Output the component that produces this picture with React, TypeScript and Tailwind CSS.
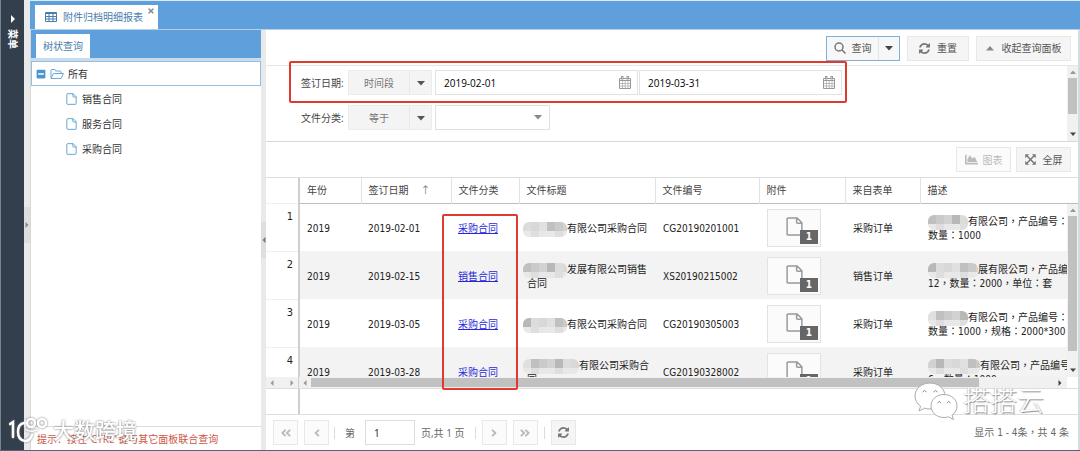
import { useState } from "react";
import type { ReactNode } from "react";
import { FaAngleDoubleLeft, FaAngleDoubleRight, FaAngleLeft, FaAngleRight, FaChartArea, FaMinusSquare, FaTimes } from "react-icons/fa";

type Row = {
  year: string;
  date: string;
  category: string;
  title: string;
  titleRest?: string;
  titleMask: number;
  code: string;
  form: string;
  desc: string;
  descRest: string;
  descMask: number;
};

const rows: Row[] = [
  { year: "2019", date: "2019-02-01", category: "采购合同", title: "有限公司采购合同", titleMask: 44, code: "CG20190201001", form: "采购订单", desc: "有限公司，产品编号：", descRest: "数量：1000", descMask: 40 },
  { year: "2019", date: "2019-02-15", category: "销售合同", title: "发展有限公司销售", titleRest: "合同", titleMask: 44, code: "XS20190215002", form: "销售订单", desc: "展有限公司，产品编号：", descRest: "12，数量：2000，单位：套", descMask: 50 },
  { year: "2019", date: "2019-03-05", category: "采购合同", title: "有限公司采购合同", titleMask: 44, code: "CG20190305003", form: "采购订单", desc: "有限公司，产品编号：", descRest: "数量：1000，规格：2000*300", descMask: 40 },
  { year: "2019", date: "2019-03-28", category: "采购合同", title: "有限公司采购合", titleRest: "同", titleMask: 56, code: "CG20190328002", form: "采购订单", desc: "有限公司，产品编号：", descRest: "6，数量：1000", descMask: 52 },
];

const columns = ["年份", "签订日期", "文件分类", "文件标题", "文件编号", "附件", "来自表单", "描述"];

function TableIcon() {
  return (
    <svg className="h-3 w-3 shrink-0" viewBox="0 0 12 12" fill="none" stroke="currentColor">
      <path d="M.5 1.5h11v9H.5zM.5 2.5h11M.5 5.5h11M.5 8h11M4 2v9M8 2v9" />
    </svg>
  );
}

function FileIcon({ className }: { className: string }) {
  return (
    <svg className={className} viewBox="0 0 16 18" fill="none" stroke="currentColor" strokeWidth="1.4" strokeLinejoin="round">
      <path d="M2 1h8.500l4.500 4.500V16q0 1-1 1H2q-1 0-1-1V2q0-1 1-1zM10 1v4q0 1 1 1h4" />
    </svg>
  );
}

function FolderIcon() {
  return (
    <svg className="h-3 w-[14px] shrink-0 text-[#6aa9dc]" viewBox="0 0 14 12" fill="none" stroke="currentColor" strokeLinejoin="round">
      <path d="M1 10V2.500Q1 1.500 2 1.500h2.500q1 0 1 1v.500H10q1 0 1 1V5.500M1 10.500l2.500-5h10l-2.500 5z" />
    </svg>
  );
}

function RefreshIcon() {
  return (
    <svg className="h-[11px] w-[11px] shrink-0 text-[#777]" viewBox="0 0 1536 1536" fill="currentColor">
      <path d="M1511 928q0 5-1 7-64 268-268 434.500t-478 166.500q-146 0-282.500-55t-243.500-157l-129 129q-19 19-45 19t-45-19-19-45v-448q0-26 19-45t45-19h448q26 0 45 19t19 45-19 45l-137 137q71 66 161 102t187 36q134 0 250-65t186-179q11-17 53-117 8-23 30-23h192q13 0 22.500 9.500t9.500 22.500zm25-800v448q0 26-19 45t-45 19h-448q-26 0-45-19t-19-45 19-45l138-138q-148-137-349-137-134 0-250 65t-186 179q-11 17-53 117-8 23-30 23h-199q-13 0-22.500-9.500t-9.500-22.500v-7q65-268 270-434.500t480-166.500q146 0 284 55.500t245 156.500l130-129q19-19 45-19t45 19 19 45z" />
    </svg>
  );
}

function SearchIcon() {
  return (
    <svg className="h-3 w-3 shrink-0 text-[#777]" viewBox="0 0 12 12" fill="none" stroke="currentColor" strokeWidth="1.500">
      <circle cx="5" cy="5" r="4" />
      <path d="M8 8l3.500 3.500" />
    </svg>
  );
}

function ExpandIcon() {
  return (
    <svg className="h-[11px] w-[11px] shrink-0 text-[#777]" viewBox="0 0 12 12" fill="currentColor" stroke="currentColor">
      <path d="M.5.5h3.500l-3.500 3.500zM11.500.5v3.500L8 .5zM.5 11.500V8L4 11.500zM11.500 11.500H8L11.500 8z" strokeWidth=".5" />
      <path d="M2 2l8 8M10 2l-8 8" strokeWidth="1.600" />
    </svg>
  );
}

function CalendarIcon() {
  return (
    <svg className="h-[13px] w-3" viewBox="0 0 12 13" fill="none" stroke="currentColor">
      <path d="M.5 2.500h11v10H.5zM.5 4.500h11" />
      <path d="M.5 7.500h11M.5 10h11M3.500 5v7.500M6.200 5v7.500M9 5v7.500" strokeWidth=".6" />
      <rect x="2.500" y=".5" width="1.500" height="2.500" fill="white" />
      <rect x="8" y=".5" width="1.500" height="2.500" fill="white" />
    </svg>
  );
}

function Caret({ dir, className = "" }: { dir: "up" | "down" | "left" | "right"; className?: string }) {
  const d = {
    up: "M0 6.500L4 2l4 4.500z",
    down: "M0 2h8L4 6.500z",
    left: "M6 0v8L2 4z",
    right: "M2 0v8l4-4z",
  }[dir];
  return (
    <svg className={`h-2 w-2 shrink-0 ${className}`} viewBox="0 0 8 8" fill="currentColor">
      <path d={d} />
    </svg>
  );
}

// pixelated patch that hides the company name
function Mask({ width, seed }: { width: number; seed: number }) {
  const tones = ["#dcdcdc", "#d2d2d2", "#c0c0c0", "#d8d8d8", "#b8b8b8", "#cacaca", "#e0e0e0"];
  const cells: ReactNode[] = [];
  for (let y = 0; y < 2; y++) {
    for (let x = 0; x * 8 < width; x++) {
      const t = y === 0 ? tones[(x * 3 + seed * 2) % tones.length] : x % 3 === 1 ? "#dedede" : "#e8e8e8";
      cells.push(<rect key={`${x}-${y}`} x={x * 8} y={y * 9} width="8" height={y ? 6 : 9} fill={t} />);
    }
  }
  return (
    <svg className="inline-block h-[15px] shrink-0 rounded-md" style={{ width }} viewBox={`0 0 ${width} 15`}>
      {cells}
    </svg>
  );
}

function ToolButton({ children, className = "", disabled = false }: { children: ReactNode; className?: string; disabled?: boolean }) {
  return (
    <button
      type="button"
      disabled={disabled}
      className={`flex h-[25px] items-center justify-center border border-[#e8e8e8] ${disabled ? "bg-[#fbfbfb] text-[#bbb]" : "bg-[#f5f5f5] text-[#555]"} ${className}`}
    >
      {children}
    </button>
  );
}

function Operator({ label, text }: { label: string; text: string }) {
  return (
    <button type="button" aria-label={label} className="ml-1 flex h-[25px] w-[84px] border border-[#ececec] bg-[#f4f4f4] text-[#777]">
      <span className="flex h-full flex-1 items-center justify-center">{text}</span>
      <span className="flex h-full w-[22px] items-center justify-center border-l border-[#e8e8e8] text-[#555]">
        <Caret dir="down" />
      </span>
    </button>
  );
}

function DateField({ label, initial }: { label: string; initial: string }) {
  const [value, setValue] = useState(initial);
  return (
    <div className="flex h-[25px] w-[203px] border border-[#e2e2e2]">
      <input
        aria-label={label}
        value={value}
        onChange={(e) => setValue(e.target.value)}
        className="min-w-0 flex-1 px-2 font-['Open_Sans',sans-serif] font-medium text-black outline-none"
      />
      <button type="button" aria-label="选择日期" className="flex w-6 items-center justify-center text-[#999]">
        <CalendarIcon />
      </button>
    </div>
  );
}

function TreePanel() {
  return (
    <aside className="flex w-[231px] shrink-0 flex-col border-l border-[#d8d8d8] bg-white">
      <div className="flex h-[28px] items-end bg-[#5f9fdc] pl-[5px]">
        <button type="button" className="h-6 bg-white px-[7px] text-[#4a7cab]">树状查询</button>
      </div>
      <div className="h-[3px] bg-[#c9dcef]" />
      <ul className="text-[#333]">
        <li>
          <div className="flex h-[25px] items-center gap-1 border border-[#94c0dd] px-1">
            <FaMinusSquare className="h-[10px] w-[10px] text-[#4b94cd]" />
            <FolderIcon />
            所有
          </div>
          <ul>
            {["销售合同", "服务合同", "采购合同"].map((t) => (
              <li key={t} className="flex h-[25px] items-center gap-[5px] pl-[35px]">
                <FileIcon className="h-3 w-[11px] text-[#5ba0cf]" />
                {t}
              </li>
            ))}
          </ul>
        </li>
      </ul>
      <p className="mt-auto flex h-6 items-center border-t border-[#ddd] pl-[6px] text-[#cc5646]">提示：按住"CTRL"键与其它面板联合查询</p>
    </aside>
  );
}

function QueryPanel() {
  return (
    <>
      <div className="flex h-[35px] shrink-0 items-center justify-end gap-[7px] pt-px pr-[7px]">
        <div className="flex h-[25px] border border-[#7fb0da] bg-[#f7f7f7] text-[#555]">
          <button type="button" className="flex w-[52px] items-center justify-center gap-[6px] border-r border-[#e4e4e4]">
            <SearchIcon />
            查询
          </button>
          <button type="button" aria-label="更多查询" className="flex w-5 items-center justify-center text-[#444]">
            <Caret dir="down" />
          </button>
        </div>
        <ToolButton className="w-[62px] gap-[7px]">
          <RefreshIcon />
          重置
        </ToolButton>
        <ToolButton className="w-[95px] gap-2">
          <Caret dir="up" className="text-[#888]" />
          收起查询面板
        </ToolButton>
      </div>
      <div className="flex h-[77px] shrink-0 border-y border-[#d8d8d8] border-t-[#e6e6e6]">
        <div className="flex min-w-0 flex-1 flex-col gap-[10px] pt-1 pl-[35px]">
          <div className="flex items-center">
            <span className="w-[43px]">签订日期:</span>
            <Operator label="签订日期条件" text="时间段" />
            <div className="ml-[3px] flex gap-px">
              <DateField label="签订日期开始" initial="2019-02-01" />
              <DateField label="签订日期结束" initial="2019-03-31" />
            </div>
          </div>
          <div className="flex items-center">
            <label htmlFor="category" className="w-[43px]">文件分类:</label>
            <Operator label="文件分类条件" text="等于" />
            <div className="relative ml-[3px]">
              <select id="category" className="block h-[25px] w-[115px] appearance-none border border-[#e0e0e0] bg-white px-2 outline-none">
                <option value="" />
                <option>采购合同</option>
                <option>销售合同</option>
              </select>
              <Caret dir="down" className="pointer-events-none absolute top-2 right-2 text-[#888]" />
            </div>
          </div>
        </div>
        <div className="flex w-[11px] flex-col items-center bg-[#f1f1f1]">
          <Caret dir="up" className="my-[2px] scale-75 text-[#999]" />
          <div className="h-9 w-[9px] bg-[#c1c1c1]" />
          <Caret dir="down" className="mt-auto mb-[3px] scale-75 text-[#444]" />
        </div>
      </div>
    </>
  );
}

function Grid() {
  return (
    <div className="flex min-h-0 flex-1 flex-col border-t border-[#dedede]">
      <div className="flex min-h-0 flex-1">
        <div className="min-w-0 flex-1 overflow-hidden">
          <table className="w-full table-fixed border-collapse">
            <colgroup>
              <col className="w-[33px]" />
              <col className="w-[62px]" />
              <col className="w-[90px]" />
              <col className="w-[68px]" />
              <col className="w-[136px]" />
              <col className="w-[104px]" />
              <col className="w-[86px]" />
              <col className="w-[75px]" />
              <col />
            </colgroup>
            <thead>
              <tr className="h-[25px] border-b border-[#bdbdbd] text-left text-[#444]">
                <th aria-label="序号" className="border-r-2 border-[#cfcfcf]" />
                {columns.map((c, i) => (
                  <th key={c} className={`px-[7px] font-normal ${i < 7 ? "border-r border-[#e2e2e2]" : ""}`}>
                    {c}
                    {i === 1 && <span className="ml-3 text-[#777]">↑</span>}
                  </th>
                ))}
              </tr>
            </thead>
            <tbody className="font-['DejaVu_Sans_Condensed','Open_Sans','Noto_Sans_CJK_SC',sans-serif] text-[#222]">
              {rows.map((r, i) => (
                <tr key={r.code} className={`h-12 ${i % 2 ? "bg-[#f3f3f3]" : "bg-white"}`}>
                  <td className="border-t border-r-2 border-t-[#efefef] border-r-[#cfcfcf] bg-white pt-[6px] pr-[5px] text-right align-top text-[11px]">{i + 1}</td>
                  <td className="px-[7px] pt-1">{r.year}</td>
                  <td className="px-[7px] pt-1">{r.date}</td>
                  <td className="px-[7px] pt-1">
                    <a href="#" className="text-[#2828d8] underline">{r.category}</a>
                  </td>
                  <td className="pt-1 pl-1 leading-[14px] whitespace-nowrap">
                    <div className="flex h-[14px] items-center">
                      <Mask width={r.titleMask} seed={i} />
                      {r.title}
                    </div>
                    {r.titleRest && <div className="pl-1">{r.titleRest}</div>}
                  </td>
                  <td className="px-2 pt-1">{r.code}</td>
                  <td className="px-2 pt-[2px]">
                    <div className="relative flex h-[38px] w-[54px] items-center justify-center border border-[#e2e2e2] bg-[#fbfbfb] pb-1">
                      <FileIcon className="h-[19px] w-[17px] text-[#999]" />
                      <span className="absolute right-[2px] bottom-[2px] flex h-[14px] w-[18px] items-center justify-center bg-[#666] font-bold text-white">1</span>
                    </div>
                  </td>
                  <td className="px-2 pt-1">{r.form}</td>
                  <td className="overflow-hidden pt-1 pl-2 font-['DejaVu_Sans_Condensed','Noto_Sans_CJK_TC',sans-serif] leading-[14px] whitespace-nowrap">
                    <div className="flex h-[14px] items-center">
                      <Mask width={r.descMask} seed={i + 1} />
                      <span>{r.desc}</span>
                    </div>
                    <div>{r.descRest}</div>
                  </td>
                </tr>
              ))}
            </tbody>
          </table>
        </div>
        <div className="flex w-[11px] flex-col">
          <div className="h-[26px] border-b border-[#bdbdbd]" />
          <div className="flex flex-1 flex-col items-center bg-[#f1f1f1]">
            <Caret dir="up" className="my-[2px] scale-75 text-[#999]" />
            <div className="h-[135px] w-[9px] bg-[#c1c1c1]" />
            <Caret dir="down" className="mt-auto mb-[3px] scale-75 text-[#444]" />
          </div>
        </div>
      </div>
      <div className="flex h-3 shrink-0 border-b border-[#dedede] bg-[#f1f1f1]">
        <div className="flex w-[33px] items-center justify-between border-r border-[#cfcfcf] px-[2px] text-[#999]">
          <Caret dir="left" className="scale-75" />
          <Caret dir="right" className="scale-75" />
        </div>
        <div className="flex flex-1 items-center">
          <Caret dir="left" className="mx-[2px] scale-75 text-[#999]" />
          <div className="h-[9px] w-[87%] bg-[#c1c1c1]" />
          <Caret dir="right" className="mr-[3px] ml-auto scale-75 text-[#444]" />
        </div>
        <div className="w-[11px] bg-white" />
      </div>
      <div className="h-[25px] shrink-0">
        <div className="h-full w-[34px] border-r-2 border-[#cfcfcf]" />
      </div>
    </div>
  );
}

function Pager() {
  const [page, setPage] = useState("1");
  return (
    <div className="flex h-9 shrink-0 items-center border-t border-[#dedede] pr-[9px] pl-[7px] text-[#666]">
      <ToolButton disabled className="w-[25px]"><FaAngleDoubleLeft size={12} /></ToolButton>
      <ToolButton disabled className="ml-[6px] w-[25px]"><FaAngleLeft size={12} /></ToolButton>
      <div className="ml-[5px] h-3 w-px bg-[#ddd]" />
      <label htmlFor="page" className="ml-[10px]">第</label>
      <input
        id="page"
        value={page}
        onChange={(e) => setPage(e.target.value)}
        className="ml-[10px] h-[25px] w-[50px] border border-[#ddd] px-2 text-[#222] outline-none"
      />
      <span className="ml-[6px]">页,共 1 页</span>
      <div className="ml-[10px] h-3 w-px bg-[#ddd]" />
      <ToolButton disabled className="ml-[6px] w-[25px]"><FaAngleRight size={12} /></ToolButton>
      <ToolButton disabled className="ml-[6px] w-[25px]"><FaAngleDoubleRight size={12} /></ToolButton>
      <div className="ml-[6px] h-3 w-px bg-[#ddd]" />
      <ToolButton className="ml-[6px] w-[25px]"><RefreshIcon /></ToolButton>
      <span className="ml-auto font-['DejaVu_Sans_Condensed','Noto_Sans_CJK_TC',sans-serif]">显示 1 - 4条，共 4 条</span>
    </div>
  );
}

function WechatMark() {
  return (
    <div className="pointer-events-none absolute right-[34px] bottom-[30px] flex items-center gap-[5px]">
      <svg className="h-[38px] w-[44px]" viewBox="0 0 44 38" fill="white" stroke="#aaa" strokeLinejoin="round">
        <path d="M16 1C7.500 1 1 6.800 1 14c0 4.200 2.100 7.700 5.600 10.200L5 29l5.600-2.800c2 .6 3.700.8 5.400.8 8.500 0 15-5.800 15-13S24.500 1 16 1z" />
        <path d="M30 12.500c-7.400 0-13 5-13 11.500s5.600 11.500 13 11.500c1.600 0 3.100-.3 4.600-.7l4.800 2.700-1.400-4.300c3.200-2.300 5-5.500 5-9.200 0-6.500-5.600-11.500-13-11.500z" />
        <path d="M8.500 10q2-3 4 0M19.500 10q2-3 4 0M23.500 21q1.700-3 3.500 0M33 21q1.700-3 3.500 0" fill="none" stroke="#888" />
      </svg>
      <span className="text-[27px] leading-8 font-light text-white [text-shadow:1px_1px_1px_#888,-1px_0_1px_#ccc]">搭搭云</span>
    </div>
  );
}

function SiteMark() {
  return (
    <div className="pointer-events-none absolute bottom-[7px] left-[9px] flex items-center gap-[6px] text-white drop-shadow-[0_0_1px_#777]">
      <svg className="h-[26px] w-[38px]" viewBox="0 0 38 26" fill="none" stroke="currentColor" strokeWidth="2.500" strokeLinecap="round">
        <path d="M1 7l3-2v15M15 6q-6 1-6 9t7 9q5 0 7-6" />
        <circle cx="22" cy="6" r="4" />
        <circle cx="33" cy="6" r="4" />
        <path d="M16 3v7M16 12q5 4 12 1" strokeWidth="1.500" />
      </svg>
      <span className="text-[21px] leading-6 font-medium">大数跨境</span>
    </div>
  );
}

export default function App() {
  return (
    <div className="relative flex h-screen overflow-hidden border-b border-[#5c6078] bg-[#e9e9e9] font-['Open_Sans','Noto_Sans_CJK_SC',sans-serif] text-[10px] leading-[14px] text-[#444]">
      <nav className="flex w-6 shrink-0 flex-col items-center border-l border-[#77828d] bg-[#333f4d] pt-[15px] text-white">
        <Caret dir="right" />
        <button type="button" className="mt-[6px] font-bold [text-orientation:sideways] [writing-mode:vertical-rl]">菜单</button>
      </nav>
      <div className="flex w-[6px] shrink-0 items-center">
        <div className="flex h-9 w-full items-center justify-center bg-[#dedede] text-[#888]">
          <Caret dir="right" className="scale-75" />
        </div>
      </div>

      <div className="flex min-w-0 flex-1 flex-col">
        <header className="flex h-[30px] shrink-0 items-end border-t border-b border-t-[#dcebf7] border-b-[#b9cfe4] bg-[#5f9fdc] pl-[5px]">
          <div className="relative flex h-6 w-[123px] items-center gap-[6px] bg-white pl-[10px] text-[#4a7cab]">
            <TableIcon />
            附件归档明细报表
            <button type="button" aria-label="关闭" className="absolute top-[2px] right-[3px] text-[#888]">
              <FaTimes size={8} />
            </button>
          </div>
        </header>

        <div className="flex min-h-0 flex-1">
          <TreePanel />
          <div className="flex w-[5px] shrink-0 items-center">
            <div className="flex h-9 w-full items-center justify-center bg-[#dedede] text-[#777]">
              <Caret dir="left" className="scale-75" />
            </div>
          </div>
          <main className="relative flex min-w-0 flex-1 flex-col border-r-2 border-[#d5dae3] bg-white">
            <QueryPanel />
            <div className="flex h-[35px] shrink-0 items-center justify-end gap-[5px] pr-[7px]">
              <ToolButton disabled className="w-[55px] gap-[5px]">
                <FaChartArea size={13} />
                图表
              </ToolButton>
              <ToolButton className="w-[55px] gap-[7px]">
                <ExpandIcon />
                全屏
              </ToolButton>
            </div>
            <Grid />
            <Pager />
            {/* highlight frames over the date filter and the category column */}
            <div className="pointer-events-none absolute top-[31px] left-[23px] h-[42px] w-[558px] rounded-xs border-2 border-[#e03a30]" />
            <div className="pointer-events-none absolute top-[184px] left-[176px] h-[176px] w-[76px] rounded-xs border-2 border-[#e03a30]" />
            <WechatMark />
          </main>
        </div>
      </div>
      <SiteMark />
    </div>
  );
}
